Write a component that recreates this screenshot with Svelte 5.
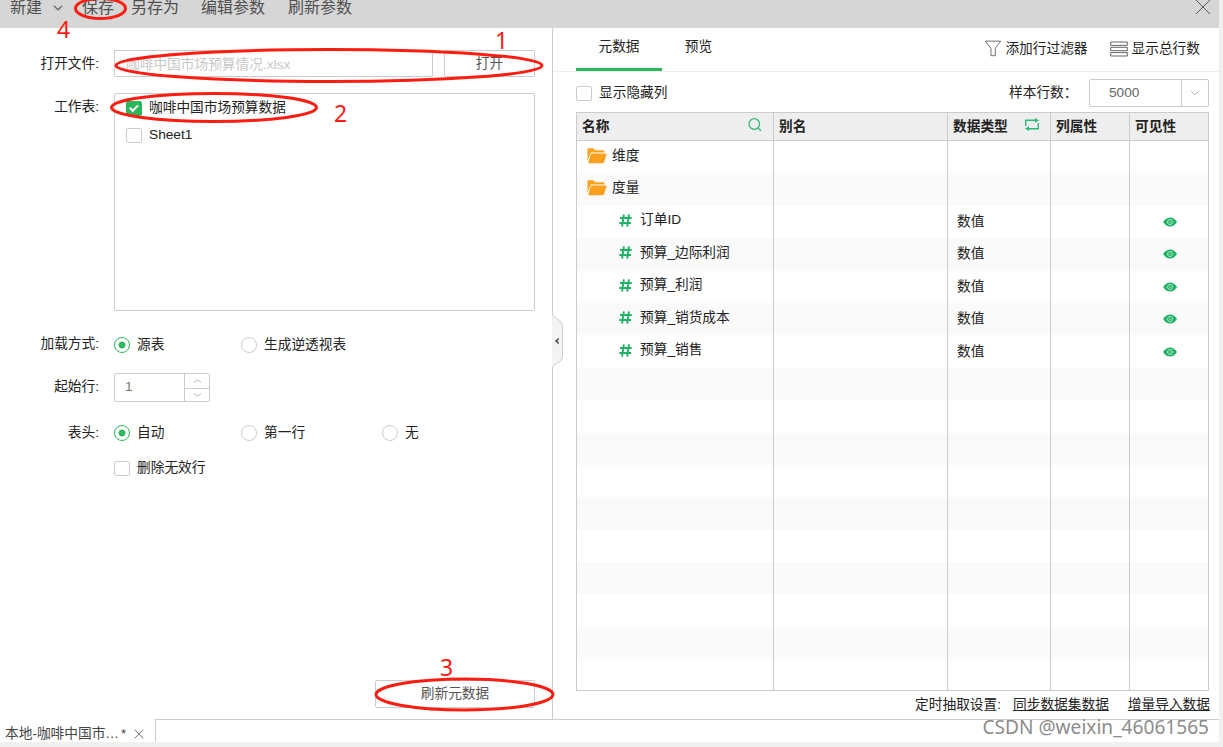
<script>
  let sheets = $state([
    { name: '咖啡中国市场预算数据', checked: true },
    { name: 'Sheet1', checked: false }
  ]);
  let loadMode = $state('源表');
  let header = $state('自动');
  let startRow = $state(1);
  let dropInvalid = $state(false);
  let showHidden = $state(false);
  let tab = $state('元数据');

  const fields = ['订单ID', '预算_边际利润', '预算_利润', '预算_销货成本', '预算_销售'];
  const rows = [
    { name: '维度', folder: true },
    { name: '度量', folder: true },
    ...fields.map(name => ({ name, type: '数值' })),
    ...Array.from({ length: 10 }, () => ({}))
  ];

  const rings = [
    { cx: 100.5, cy: 8.5, rx: 25, ry: 10 },
    { cx: 329, cy: 65.5, rx: 213, ry: 16 },
    { cx: 214, cy: 107.5, rx: 102.5, ry: 14 },
    { cx: 464.5, cy: 694.5, rx: 88.5, ry: 15.5 }
  ];
  const marks = [
    { n: 4, x: 57, y: 38 },
    { n: 1, x: 495, y: 49 },
    { n: 2, x: 334, y: 122 },
    { n: 3, x: 440, y: 676 }
  ];
</script>

{#snippet radio(label, on, pick)}
  <button class="opt" onclick={pick}>
    <span class="radio" class:on></span>{label}
  </button>
{/snippet}

{#snippet check(label, on, toggle)}
  <button class="opt" onclick={toggle}>
    <span class="box" class:on>
      {#if on}<svg viewBox="0 0 14 14"><path d="M2.8 6.8l3 3 5.2-5.4" /></svg>{/if}
    </span>{label}
  </button>
{/snippet}

<div class="app">
  <header class="toolbar">
    <span class="new">新建 <svg viewBox="0 0 10 6"><path d="M.8.8L5 4.8 9.2.8" /></svg></span>
    <span class="save">保存</span>
    <span class="save-as">另存为</span>
    <span class="edit">编辑参数</span>
    <span>刷新参数</span>
    <svg class="close" viewBox="0 0 16 16"><path d="M1 1l14 14M15 1L1 15" /></svg>
  </header>

  <main>
    <section class="source">
      <div class="row file">
        <span class="label">打开文件:</span>
        <div class="input path">咖啡中国市场预算情况.xlsx</div>
        <button class="btn open">打开</button>
      </div>
      <div class="row sheets">
        <span class="label">工作表:</span>
        <div class="list">
          {#each sheets as s}
            {@render check(s.name, s.checked, () => (s.checked = !s.checked))}
          {/each}
        </div>
      </div>
      <div class="row mode">
        <span class="label">加载方式:</span>
        <div class="opts">
          {#each ['源表', '生成逆透视表'] as m}
            {@render radio(m, loadMode === m, () => (loadMode = m))}
          {/each}
        </div>
      </div>
      <div class="row start">
        <span class="label">起始行:</span>
        <div class="spinner">
          <span class="num">{startRow}</span>
          <div class="arrows">
            <button aria-label="up" onclick={() => startRow++}><svg viewBox="0 0 10 6"><path d="M1 4.8L5 1.4l4 3.4" /></svg></button>
            <button aria-label="down" onclick={() => startRow--}><svg viewBox="0 0 10 6"><path d="M1 1.2l4 3.4 4-3.4" /></svg></button>
          </div>
        </div>
      </div>
      <div class="row head">
        <span class="label">表头:</span>
        <div class="opts">
          {#each ['自动', '第一行', '无'] as h}
            {@render radio(h, header === h, () => (header = h))}
          {/each}
        </div>
      </div>
      <div class="row invalid">
        <span class="label"></span>
        {@render check('删除无效行', dropInvalid, () => (dropInvalid = !dropInvalid))}
      </div>
      <button class="btn refresh">刷新元数据</button>
      <svg class="collapse" viewBox="0 0 12 56">
        <path class="flap" d="M0 .5C1 6 10.5 6 10.5 13v30C10.5 50 1 50 0 55.5" />
        <path class="tip" d="M6.8 24.6L2.8 28l4 3.4v-2.2L5.4 28l1.4-1.2z" />
      </svg>
    </section>

    <section class="meta">
      <nav>
        {#each ['元数据', '预览'] as t}
          <button class="tab" class:active={tab === t} onclick={() => (tab = t)}>{t}</button>
        {/each}
        <span class="action filter">
          <svg viewBox="0 0 18 18"><path d="M.8 1.2h16.4l-5.8 7.6v7.8H6.8V8.8z" /></svg>添加行过滤器
        </span>
        <span class="action total">
          <svg viewBox="0 0 18 16"><path d="M.7 1h16.6v3.4H.7zM.7 6.3h16.6v3.4H.7zM.7 11.6h16.6V15H.7z" /></svg>显示总行数
        </span>
      </nav>

      <div class="options">
        {@render check('显示隐藏列', showHidden, () => (showHidden = !showHidden))}
        <span class="sample">样本行数：</span>
        <div class="select">
          <span>5000</span>
          <i><svg viewBox="0 0 10 6"><path d="M.8 1l4.2 3.8L9.2 1" /></svg></i>
        </div>
      </div>

      <div class="table">
        <div class="tr th">
          <div>名称
            <svg class="search" viewBox="0 0 14 14"><circle cx="6.3" cy="6" r="5.3" /><path d="M10 10l3 2.8" /></svg>
          </div>
          <div>别名</div>
          <div>数据类型
            <svg class="swap" viewBox="0 0 16 13"><path d="M1.7 8V2.3h10.5M14.3 5v5.7H3.8" /><path class="fill" d="M11 0l4 2.3-4 2.4zM5 13l-4-2.3 4-2.4z" /></svg>
          </div>
          <div>列属性</div>
          <div>可见性</div>
        </div>
        {#each rows as r}
          <div class="tr">
            <div class="name" class:leaf={r.type}>
              {#if r.folder}
                <svg class="folder" viewBox="0 0 20 16"><path d="M.5 1.2Q.5.3 1.4.3h5l1.7 2h8.4q.9 0 .9.9v1.3H4.6q-1 0-1.3.9L.5 13z" /><path d="M4.9 5.5h14.3q.6 0 .4.6l-2.5 8.2q-.3.9-1.2.9H1.8q-.8 0-.5-.8l2.5-8.1q.3-.8 1.1-.8z" /></svg>
              {:else if r.type}
                <svg class="hash" viewBox="0 0 13 13"><path d="M4.9.3L3.1 12.7M10 .3L8.2 12.7M1 4h11.7M.3 9H12" /></svg>
              {/if}
              {r.name ?? ''}
            </div>
            <div></div>
            <div class="type">{r.type ?? ''}</div>
            <div></div>
            <div class="vis">
              {#if r.type}
                <svg viewBox="0 0 14 10"><path d="M0 5Q3 .4 7 .4T14 5q-3 4.6-7 4.6T0 5z" /><circle cx="7" cy="5" r="2.5" /><circle class="pupil" cx="7" cy="5" r=".7" /></svg>
              {/if}
            </div>
          </div>
        {/each}
      </div>

      <footer>
        <span>定时抽取设置:</span>
        <u>同步数据集数据</u>
        <u>增量导入数据</u>
      </footer>
    </section>
  </main>

  <div class="docs">
    <div class="doc">
      本地-咖啡中国市…<sup>*</sup>
      <svg viewBox="0 0 10 10"><path d="M.7.7l8.6 8.6M9.3.7L.7 9.3" /></svg>
    </div>
    <div class="rest"></div>
  </div>

  <!-- step annotations on top of the dialog -->
  <svg class="rings" viewBox="0 0 1223 747">
    {#each rings as r}
      <ellipse cx={r.cx} cy={r.cy} rx={r.rx} ry={r.ry} />
    {/each}
    {#each marks as m}
      <text x={m.x} y={m.y}>{m.n}</text>
    {/each}
  </svg>
  <div class="watermark">CSDN @weixin_46061565</div>
</div>

<style>
  :global(body) { background: #f0f0f0; overflow: hidden; }
  .app {
    position: relative;
    width: 1223px; height: 747px;
    overflow: hidden;
    font: 13.7px/20px "Liberation Sans", "Noto Sans CJK SC", sans-serif;
    color: #222;
  }
  .app * { box-sizing: border-box; }
  svg { fill: none; stroke: #777; flex-shrink: 0; }
  button { font: inherit; color: inherit; background: none; border: none; padding: 0; white-space: nowrap; }

  .toolbar {
    display: flex; align-items: center;
    width: 1219px; height: 28px;
    padding: 0 8px 12px 10px;
    background: #d6d6d6;
    font-size: 16px; color: #505050;
  }
  .toolbar span { white-space: nowrap; }
  .new { width: 72px; display: flex; align-items: center; gap: 11px; }
  .new svg { width: 10px; height: 6px; stroke: #666; stroke-width: 1.2; }
  .save { width: 49px; }
  .save-as { width: 70px; }
  .edit { width: 87px; }
  .close { width: 16px; height: 16px; margin: 0 0 2px auto; stroke: #555; }

  main { display: flex; width: 1219px; height: 691px; background: #fff; }
  .source {
    position: relative;
    width: 553px;
    padding: 22px 17px 0 0;
    border-right: 1px solid #ccc;
    display: flex; flex-direction: column;
  }
  .row { display: flex; align-items: flex-start; }
  .label { width: 99px; margin-right: 15px; text-align: right; flex-shrink: 0; }
  .file { height: 43px; }
  .file .label { padding-top: 4px; }
  .input { border: 1px solid #ccc; border-radius: 1px; }
  .path { width: 319px; height: 27px; padding: 4px 12px 2px 11px; color: #c8c8c8; }
  .btn { border: 1px solid #ccc; border-radius: 2px; color: #555; height: 27px; }
  .open { width: 91px; margin-left: 11px; padding-top: 1px; }
  .sheets { height: 241px; }
  .sheets .label { padding-top: 4px; }
  .list {
    width: 421px; height: 218px;
    border: 1px solid #ccc; border-radius: 2px;
    padding: 4px 11px;
    display: flex; flex-direction: column; gap: 7px;
  }
  .opt { display: flex; align-items: center; height: 20px; }
  .box {
    width: 16px; height: 15px;
    margin-right: 7px;
    border: 1px solid #ccc; border-radius: 2px;
    display: flex; align-items: center; justify-content: center;
  }
  .box.on { background: #2bb85b; border-color: #2bb85b; }
  .box svg { width: 14px; height: 14px; stroke: #fff; stroke-width: 2; }
  .radio {
    width: 16px; height: 16px;
    margin-right: 7px;
    border: 1px solid #ccc; border-radius: 50%;
  }
  .radio.on { border-color: #2bb85b; background: radial-gradient(circle, #2bb85b 3.2px, transparent 3.8px); }
  .opts { display: grid; grid-template-columns: 127px 141px auto; padding-top: 1px; }
  .mode { height: 39px; }
  .start { height: 49px; }
  .start .label { padding-top: 4px; }
  .spinner { display: flex; width: 96px; height: 29px; border: 1px solid #ccc; border-radius: 2px; }
  .num { flex: 1; padding: 3px 10px; color: #777; }
  .arrows { width: 25px; border-left: 1px solid #ccc; display: grid; grid-template-rows: 1fr 1fr; }
  .arrows button { display: flex; align-items: center; justify-content: center; }
  .arrows button + button { border-top: 1px solid #ccc; }
  .arrows svg { width: 9px; height: 6px; stroke: #aaa; }
  .head { height: 36px; }
  .head .label { padding-top: 1px; }
  .refresh { width: 160px; height: 28px; margin: auto 0 11px auto; }
  .collapse { position: absolute; left: 552px; top: 285px; width: 12px; height: 56px; z-index: 1; }
  .flap { fill: #f3f3f3; stroke: #ccc; }
  .tip { fill: #555; stroke: none; }

  .meta { flex: 1; display: flex; flex-direction: column; }
  nav { display: flex; height: 44px; padding-left: 23px; border-bottom: 1px solid #eee; }
  .tab { width: 86px; height: 43px; padding-bottom: 2px; border-bottom: 3px solid transparent; }
  .tab + .tab { width: 73px; }
  .tab.active { border-color: #2bb85b; }
  .action { display: flex; align-items: center; height: 41px; white-space: nowrap; }
  .action svg { width: 18px; height: 17px; margin-right: 3px; stroke: #666; }
  .filter { margin-left: auto; }
  .total { margin: 0 19px 0 22px; }
  .total svg { height: 16px; margin-right: 4px; }

  .options { display: flex; align-items: center; height: 40px; padding: 2px 10px 0 23px; }
  .options .opt { margin-right: auto; }
  .sample { width: 80px; white-space: nowrap; }
  .select { display: flex; width: 120px; height: 28px; border: 1px solid #ccc; border-radius: 2px; color: #666; }
  .select span { flex: 1; padding: 3px 19px; }
  .select i { width: 27px; border-left: 1px solid #ccc; display: flex; align-items: center; justify-content: center; }
  .select svg { width: 10px; height: 6px; stroke: #bbb; }

  .table { width: 633px; height: 579px; margin-left: 23px; border: 1px solid #ccc; overflow: hidden; }
  .tr { display: grid; grid-template-columns: 197px 174px 103px 79px 78px; height: 32.4px; }
  .tr > div { display: flex; align-items: center; border-right: 1px solid #ccc; padding-left: 5px; white-space: nowrap; }
  .tr > div:last-child { border-right: none; }
  .tr:nth-child(odd) { background: #fafafa; }
  .tr.th { height: 28px; background: #eee; border-bottom: 1px solid #ccc; font-weight: bold; }
  .search { width: 14px; height: 14px; margin: 0 11px 3px auto; stroke: #2bb873; stroke-width: 1.2; }
  .swap { width: 16px; height: 13px; margin: 0 10px 4px auto; stroke: #2bb873; stroke-width: 1.4; }
  .swap .fill { fill: #2bb873; stroke: none; }
  .tr > .name { padding: 0 0 3px 10px; }
  .tr > .leaf { padding-left: 42px; }
  .folder { width: 20px; height: 16px; margin-right: 5px; fill: #f9a11f; stroke: none; }
  .hash { width: 13px; height: 13px; margin-right: 8px; stroke: #20b267; stroke-width: 1.9; }
  .tr > .type { padding: 0 0 0 9px; }
  .tr > .vis { justify-content: center; padding: 0 0 0 1px; }
  .vis svg { width: 14px; height: 10px; fill: #20b267; stroke: none; }
  .vis circle { stroke: #bfe8cf; stroke-width: .9; }
  .vis .pupil { fill: #d8f2e2; stroke: none; }

  footer { display: flex; padding: 4px 9px 0 0; justify-content: flex-end; }
  footer span { margin-right: 12px; }
  footer u + u { margin-left: 19px; }

  .docs { display: flex; width: 1219px; height: 23px; background: #fff; overflow: hidden; }
  .doc { display: flex; align-items: center; width: 155px; height: 29px; padding-left: 5px; color: #444; white-space: nowrap; }
  .doc sup { font-size: 13px; line-height: 10px; margin-left: 2px; }
  .doc svg { width: 10px; height: 10px; margin-left: 8px; }
  .rest { flex: 1; border: 1px solid #ccc; border-width: 1px 0 0 1px; }

  .rings { position: absolute; inset: 0; width: 1223px; height: 747px; pointer-events: none; z-index: 2; }
  .rings ellipse { stroke: #fb1d12; stroke-width: 3; }
  .rings text { fill: #fb1d12; stroke: none; font: 23px "Noto Sans", sans-serif; }
  .watermark {
    position: absolute; right: 14px; bottom: 8px;
    font: 19.1px/24px "Noto Sans", sans-serif;
    color: #8c8c8c;
    white-space: nowrap;
  }
</style>
